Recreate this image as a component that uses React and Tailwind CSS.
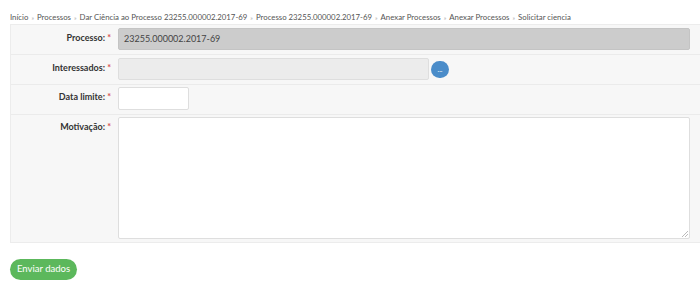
import React from "react";

const crumbs = [
  "Início",
  "Processos",
  "Dar Ciência ao Processo 23255.000002.2017-69",
  "Processo 23255.000002.2017-69",
  "Anexar Processos",
  "Anexar Processos",
  "Solicitar ciencia",
];

const Label = ({ children }) => (
  <div className="w-[102px] shrink-0 text-right text-[9px] font-bold text-[#333] pt-[3px] pr-[2px]">
    {children}: <span className="text-[#d9534f]">*</span>
  </div>
);

const App = () => {
  return (
    <div
      className="w-[700px] h-[284px] bg-white pt-[12px] pl-[10px]"
      style={{ fontFamily: "Lato, 'Open Sans', sans-serif" }}
    >
      {/* Breadcrumb */}
      <div className="flex items-center text-[7.8px] text-[#555] h-[11px]">
        {crumbs.map((c, i) => (
          <React.Fragment key={i}>
            {i > 0 && <span className="mx-[3px] text-[#aaa] text-[6px]">»</span>}
            <span>{c}</span>
          </React.Fragment>
        ))}
      </div>

      {/* Form panel */}
      <div className="mt-[1px] bg-[#f7f7f7] border border-[#ececec] border-r-0">
        <div className="flex h-[30px] pt-[3px] border-b border-[#ebebeb]">
          <Label>Processo</Label>
          <div className="ml-[5px] w-[572px] h-[22px] bg-[#cccccc] border border-[#c4c4c4] rounded-[2px] text-[9px] text-[#444] pl-[5px] flex items-center">
            23255.000002.2017-69
          </div>
        </div>
        <div className="flex h-[30px] pt-[3px] border-b border-[#ebebeb]">
          <Label>Interessados</Label>
          <div className="ml-[5px] w-[311px] h-[22px] bg-[#ececec] border border-[#dedede] rounded-[2px]" />
          <div className="ml-[2px] mt-[3px] w-[18px] h-[17px] rounded-full bg-[#4a8cc9] text-white text-[7px] flex items-center justify-center leading-none">
            ...
          </div>
        </div>
        <div className="flex h-[30px] pt-[2px] border-b border-[#ebebeb]">
          <Label>Data limite</Label>
          <div className="ml-[5px] w-[71px] h-[23px] bg-white border border-[#dedede] rounded-[2px]" />
        </div>
        <div className="flex h-[127px] pt-[2px]">
          <Label>Motivação</Label>
          <div className="relative ml-[5px] w-[572px] h-[122px] bg-white border border-[#dedede] rounded-[2px]">
            <svg className="absolute right-[1px] bottom-[1px]" width="6" height="6" viewBox="0 0 6 6">
              <path d="M6 0 L0 6 M6 3 L3 6" stroke="#bbb" strokeWidth="1" />
            </svg>
          </div>
        </div>
      </div>

      {/* Submit */}
      <button className="mt-[16px] h-[21px] w-[67px] rounded-full bg-[#5cb85c] text-white text-[9.5px] flex items-center justify-center">
        Enviar dados
      </button>
    </div>
  );
};

export default App;
